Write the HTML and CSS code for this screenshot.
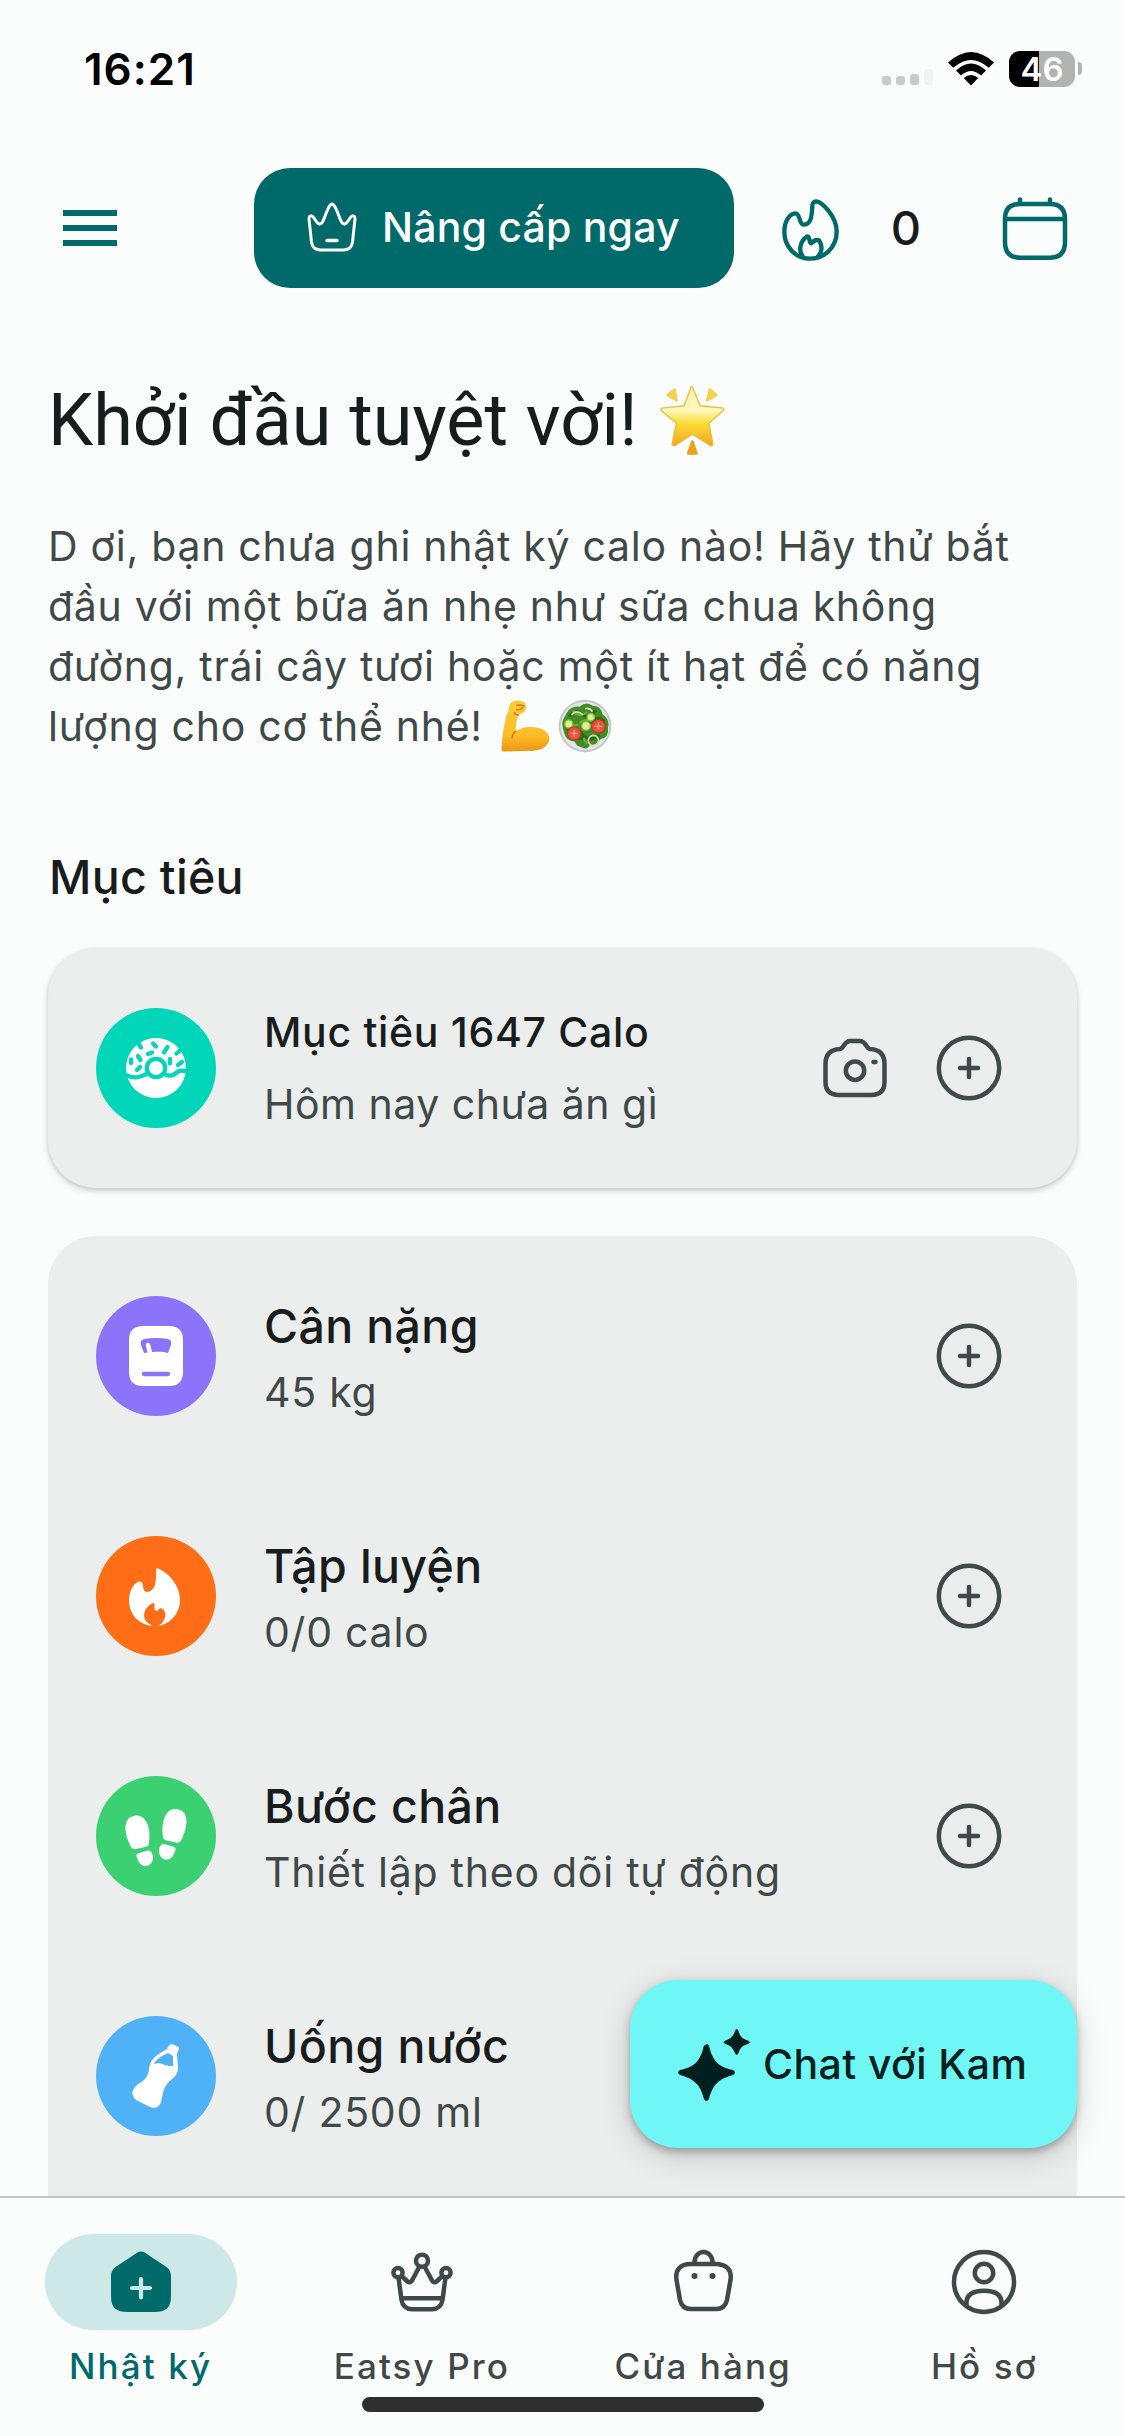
FILE: index.html
```html
<!DOCTYPE html>
<html lang="vi">
<head>
<meta charset="utf-8">
<title>Nhật ký</title>
<link rel="stylesheet" href="styles.css">
</head>
<body>
<svg width="0" height="0" class="defs" aria-hidden="true">
  <symbol id="add" viewBox="0 0 72 72"><g fill="none" stroke="currentColor" stroke-width="4.500" stroke-linecap="round"><circle cx="36" cy="36" r="30.200"/><path d="M36 27v18M27 36h18"/></g></symbol>
</svg>
<div class="screen">
  <div class="status">
    <span class="clock">16:21</span>
    <div class="status-icons">
      <svg width="52" height="18" viewBox="0 0 52 18"><g fill="#c9cbcb"><rect y="8" width="9" height="9" rx="3"/><rect x="14" y="8" width="9" height="9" rx="3"/><rect x="28" y="6" width="9" height="11" rx="3"/></g><rect x="42" y="1" width="9" height="16" rx="3" fill="#f1f3f3"/></svg>
      <svg class="wifi" width="46" height="34" viewBox="0 0 46 34"><path d="M0 10.500Q23-10.500 46 10.500L40.800 15.800Q23-0 5.200 15.800Z"/><path d="M8 18.500Q23 4.500 38 18.500L33 23.600Q23 14.500 13 23.600Z"/><path d="M15.800 26Q23 20 30.200 26L23 33.400Z"/></svg>
      <div class="battery"><span>46</span></div>
      <div class="nub"></div>
    </div>
  </div>

  <header class="topbar">
    <div class="menu"><i></i><i></i><i></i></div>
    <div class="upgrade">
      <svg width="56" height="56" viewBox="0 0 56 56" fill="none" stroke="#fff" stroke-width="3" stroke-linecap="round" stroke-linejoin="round"><path d="M5 20C5 16 8 16 10 19C13 24 16 28 19 22C22 15 25 5 28 5C31 5 34 15 37 22C40 28 43 24 46 19C48 16 51 16 51 20L48.500 43Q47.500 50.500 40 51H16Q8.500 50.500 7.500 43Z"/><path d="M23 41.500h10" stroke-width="3.400"/></svg>
      <span>Nâng cấp ngay</span>
    </div>
    <svg class="flame" width="62" height="66" viewBox="120 140 186 198" fill="none" stroke="#006a6a" stroke-width="13" stroke-linejoin="round" stroke-linecap="round"><path d="M217 170C216 158 222 152 232 154C244 156 290 196 290 244C290 290 254 325 210 325C166 325 133 288 133 244C133 214 148 190 166 189C182 189 176 224 192 223C214 222 215 196 217 170Z"/><path d="M188 318C176 304 178 272 202 258C212 262 206 278 214 279C222 270 230 266 238 271C248 288 246 308 234 318"/></svg>
    <span class="streak">0</span>
    <svg class="calendar" width="72" height="72" viewBox="0 0 72 72" fill="none" stroke="#006a6a" stroke-width="4.500" stroke-linecap="round"><path d="M21 12H51Q66 12 66 27V50Q66 65.700 51 65.700H21Q6 65.700 6 50V27Q6 12 21 12ZM6 27H66M21 7.500V12M51 7.500V12"/></svg>
  </header>

  <main class="content">
    <h1>Khởi đầu tuyệt vời!<svg class="star" role="img" aria-label="🌟" width="67" height="71" viewBox="536 44 200 212">
      <defs><linearGradient id="sg" x1="0" y1="0" x2="0" y2="1"><stop offset="0" stop-color="#ffefae"/><stop offset=".4" stop-color="#fff8bd"/><stop offset=".62" stop-color="#fcdc39"/><stop offset="1" stop-color="#f0a41c"/></linearGradient></defs>
      <path d="M636 50L659 106L728 113Q732 117 727 121L685 158L697 221Q695 228 689 225L636 191L584 225Q576 227 575 220L588 158L543 121Q539 116 545 113L611 106L632 50Q634 46 636 50Z" fill="url(#sg)" stroke="#efbd3d" stroke-width="4"/>
      <path d="M558 72L581 54Q585 52 586 57L592 91Q592 96 587 93L559 77ZM711 72L689 54Q685 52 684 57L676 91Q676 96 681 93L710 77Z" fill="#f6d04a"/><path d="M632 211Q636 205 639 211L652 248Q652 252 647 252H623Q618 252 619 247Z" fill="#eaa121"/></svg></h1>
    <p class="tip">D ơi, bạn chưa ghi nhật ký calo nào! Hãy thử bắt đầu với một bữa ăn nhẹ như sữa chua không đường, trái cây tươi hoặc một ít hạt để có năng lượng cho cơ thể nhé!<svg class="arm" role="img" aria-label="💪" width="51" height="54" viewBox="62 988 152 160">
      <defs><linearGradient id="ag" x1="0" y1="0" x2="0" y2="1"><stop offset="0" stop-color="#ffcb36"/><stop offset=".7" stop-color="#fdbb27"/><stop offset="1" stop-color="#eb9612"/></linearGradient></defs>
      <path d="M90 1008Q93 996 106 993Q120 990 132 996Q141 1001 139 1014Q139 1026 129 1029L116 1036Q107 1060 109 1084Q130 1070 154 1071Q188 1072 204 1090Q214 1104 206 1118Q192 1144 150 1142L72 1144Q64 1143 67 1128Q70 1080 80 1042Q88 1024 90 1008Z" fill="url(#ag)"/><path d="M109 1084Q98 1092 98 1104M112 1006Q120 1004 134 1008M112 1019Q122 1022 130 1013M116 1036Q106 1034 104 1028" fill="none" stroke="#c47a10" stroke-width="4" stroke-linecap="round"/></svg><svg class="salad" role="img" aria-label="🥗" width="54" height="54" viewBox="236 989 160 160">
      <circle cx="316" cy="1069" r="78" fill="#c3c9cb"/><circle cx="316" cy="1069" r="72" fill="#e3e6e6"/>
      <path d="M262 1030Q275 1008 300 1012Q320 994 340 1010Q362 1008 368 1034Q392 1050 384 1076Q388 1104 362 1108Q350 1126 330 1126Q322 1142 306 1132Q290 1130 286 1116Q258 1112 254 1088Q244 1060 252 1048Z" fill="#428c26"/>
      <path d="M270 1040Q290 1016 306 1034T350 1022M264 1084Q284 1064 306 1092T360 1096M330 1060Q350 1036 374 1056M296 1108Q320 1098 334 1112" fill="none" stroke="#286b18" stroke-width="9"/><path d="M280 1024Q300 1046 322 1028M300 1060Q320 1044 336 1056M276 1070L296 1064M312 1104L322 1122" fill="none" stroke="#68ad35" stroke-width="7"/>
      <g fill="#dff18e" stroke="#83bd42" stroke-width="4"><circle cx="268" cy="1063" r="12"/><circle cx="333" cy="1043" r="11"/><circle cx="319" cy="1069" r="13"/></g>
      <g fill="#e8513a" stroke="#bf3524" stroke-width="3"><circle cx="284" cy="1091" r="20"/><circle cx="356" cy="1070" r="20"/></g><path d="M272 1091h24M284 1080v22M344 1070h24M356 1059v22" stroke="#f5a184" stroke-width="4"/>
      <g fill="none" stroke="#e4d2bd" stroke-width="5"><circle cx="341" cy="1112" r="15"/><path d="M276 1036Q290 1018 310 1036M316 1018Q330 1014 338 1026"/></g></svg></p>

    <h2>Mục tiêu</h2>

    <section class="card goal">
      <svg class="badge" viewBox="0 0 120 120"><circle cx="60" cy="60" r="60" fill="#02d6b8"/><circle cx="60" cy="60" r="30" fill="#fff"/><g fill="none" stroke="#02d6b8" stroke-width="4.300" stroke-linecap="round"><circle cx="60" cy="60" r="9.200"/><path d="M29 66.500C37 71 43 70 51 65.500M69 66.500C81 71 78 59.500 91 63.500M35 51.500V55M42 48L44.500 52M44 59L41 62M52 46L56 44.500M57 35.500L60 38.500M71.500 39L68 44.500M42 35L45 39.500M85 41.500L80.500 45.500M74 51V55.500M86 54L82 57"/></g></svg>
      <div class="info"><b>Mục tiêu 1647 Calo</b><span>Hôm nay chưa ăn gì</span></div>
      <svg class="camera" width="72" height="72" viewBox="0 0 72 72" fill="none" stroke="#3f4948" stroke-width="4.500" stroke-linecap="round"><path d="M6.500 32C6.500 22 12 17.500 21 17C25 16.500 25 9 31 9H41C47 9 47 16.500 51 17C60 17.500 65.500 22 65.500 32V50Q65.500 63 52 63H20Q6.500 63 6.500 50Z"/><circle cx="36" cy="38.700" r="9.200"/><path d="M54.500 30H56.500"/></svg>
      <svg class="add"><use href="#add"/></svg>
    </section>

    <section class="card list">
      <div class="row">
        <svg class="badge" viewBox="0 0 120 120"><circle cx="60" cy="60" r="60" fill="#8b73fa"/><path d="M47 30H73Q87 30 87 44V76Q87 90 73 90H47Q33 90 33 76V44Q33 30 47 30Z" fill="#fff"/><path d="M48 57L45 49C44 46 45 44 48 43C56 41.500 64 41.500 72 43C75 44 75.500 46 75 49L72 57C68 55.500 62 55.500 56 56Z" fill="#8b73fa"/><path d="M52 49L54 57" stroke="#fff" stroke-width="4.500" stroke-linecap="round"/><path d="M48 78H72" stroke="#8b73fa" stroke-width="4.300" stroke-linecap="round"/></svg>
        <div class="info"><b>Cân nặng</b><span>45 kg</span></div>
        <svg class="add"><use href="#add"/></svg>
      </div>
      <div class="row">
        <svg class="badge" viewBox="0 0 120 120"><circle cx="60" cy="60" r="60" fill="#ff6e17"/><path d="M60 34C60 31.500 62 32 63 33C74 38 84 50 84 64C84 78 74 88 62 90C70 86 72 75 65 72C62 73 62 75.500 60 75C57 74 60 67 57 67C46 72 44 86 58 90C42 89 33 78 33 64C33 53 40 45 44 45.500C49 46 45 55.500 51 56C61 55 60 42 60 34Z" fill="#fff"/></svg>
        <div class="info"><b>Tập luyện</b><span>0/0 calo</span></div>
        <svg class="add"><use href="#add"/></svg>
      </div>
      <div class="row">
        <svg class="badge" viewBox="0 0 120 120"><circle cx="60" cy="60" r="60" fill="#3bd172"/><g fill="#fff"><path id="foot" d="M41 39.500C51 40 55 53 53 67C53 69.500 51.500 70.500 49 71L40 73C36 74 35 71 34 69C28 56 26 40 41 39.500ZM43 77L52 74.500C56 73.500 57 80 57 82C56 92 45 93 42 84C40 80 39.500 78 43 77Z"/><use href="#foot" transform="translate(120 -6.500) scale(-1 1)"/></g></svg>
        <div class="info"><b>Bước chân</b><span>Thiết lập theo dõi tự động</span></div>
        <svg class="add"><use href="#add"/></svg>
      </div>
      <div class="row">
        <svg class="badge" viewBox="0 0 120 120"><circle cx="60" cy="60" r="60" fill="#4fb2f6"/><path fill="#fff" fill-rule="evenodd" d="M71 33L72.500 30Q74 27.500 77 28.500L81 30Q84 31.500 82.500 34L81 38L82 52C82 60 76 62 72 67C66 74 67 80 65 86C63 92 58 93 54 91L40 84C36 80 35 76 39 71C42 67 48 66 51 60C54 55 52 50 56 44C60 39 66 36 71 33ZM72 37C66 40 60 43 58 48C66 45.500 69 51 77 50L77 40Z"/></svg>
        <div class="info"><b>Uống nước</b><span>0/ 2500 ml</span></div>
      </div>
    </section>
  </main>

  <div class="fab">
    <svg width="74" height="74" viewBox="0 0 74 74" fill="#002020"><path d="M25.800 12C28.300 9.500 30.600 9.500 31 12C35 28 41 33 55 36Q59 38.700 55 41C41 45 35 50 31 65Q28.500 69 26 65C22 50 16 45 2 41Q-2 38.700 2 36C16 33 22 28 25.800 12Z"/><path d="M57 -3Q58.700 -7 60.500 -3C62 3 65 5 70 6.500Q74 8.300 70 10C65 11 62 14 60.500 19Q58.700 23 57 19C55 14 52 11 47.500 10Q43.500 8.300 47.500 6.500C52 5 55 3 57 -3Z"/></svg>
    <span>Chat với Kam</span>
  </div>

  <nav class="tabs">
    <div class="tab active"><div class="pill"><svg width="72" height="72" viewBox="0 0 72 72"><path fill="#006a6a" d="M36 5.500C39 5.500 41 7.500 44 9.500L60 20C64.500 23 66 26 66 31V50C66 62 61 66 49 66H23C11 66 6 62 6 50V31C6 26 7.500 23 12 20L28 9.500C31 7.500 33 5.500 36 5.500Z"/><path d="M36 33V51.500M27 42H45" stroke="#cce8e7" stroke-width="4.200" stroke-linecap="round"/></svg></div><span>Nhật ký</span></div>
    <div class="tab"><div class="pill"><svg width="72" height="72" viewBox="0 0 72 72" fill="none" stroke="#3f4948" stroke-width="4.500" stroke-linejoin="round"><circle cx="36" cy="14.700" r="6"/><circle cx="12" cy="26.700" r="4.600"/><circle cx="60" cy="26.700" r="4.600"/><path d="M12.500 31.500L15.500 54Q17 63 26 63.300H46Q55 63 56.500 54L59.500 31.500M15 29.500L21.500 35.500Q24 37.500 26 34.500L33.500 20.500M57 29.500L50.500 35.500Q48 37.500 46 34.500L38.500 20.500M15.500 52.300H56.500"/></svg></div><span>Eatsy Pro</span></div>
    <div class="tab"><div class="pill"><svg width="72" height="72" viewBox="0 0 72 72" fill="none" stroke="#3f4948" stroke-width="4.500"><path d="M24 18H48C60 18 65 24 63.500 34L60 54Q58 63 49 63H24Q15 63 13 54L9.500 34C8 24 13 18 24 18ZM27.500 18V16A9 10 0 0 1 45.500 16V18"/><g fill="#3f4948" stroke="none"><circle cx="27.500" cy="30" r="3"/><circle cx="45.500" cy="30" r="3"/></g></svg></div><span>Cửa hàng</span></div>
    <div class="tab"><div class="pill"><svg width="72" height="72" viewBox="0 0 72 72" fill="none" stroke="#3f4948" stroke-width="4.500"><circle cx="36" cy="36" r="30"/><circle cx="36" cy="27" r="9.200"/><path d="M18.500 59.500V57C18.500 48 26 44.700 36 44.700S53.500 48 53.500 57V59.500"/></svg></div><span>Hồ sơ</span></div>
    <div class="home-bar"></div>
  </nav>
</div>
</body>
</html>
```
FILE: styles.css
```css
* { box-sizing: border-box; }
body { margin: 0; background: #fbfdfd; color: #191c1c; font-family: Inter, "Noto Sans", sans-serif; }
svg { display: block; flex: none; }
.defs { position: absolute; }
.screen { position: relative; width: 1125px; height: 2436px; display: flex; flex-direction: column; overflow: hidden; background: #fbfdfd; }

.status { flex: none; height: 168px; padding: 0 43px 31px 84px; display: flex; align-items: center; justify-content: space-between; color: #000; }
.clock { font-size: 44px; font-weight: 600; letter-spacing: 1px; }
.status-icons { display: flex; align-items: center; height: 36px; }
.status-icons > svg:first-child { margin: 16px 14px 0 0; }
.wifi { margin-right: 15px; }
.battery { width: 66px; height: 36px; border-radius: 11px; display: flex; align-items: center; justify-content: center; background: linear-gradient(90deg, #000 30px, #b1b3b3 30px); color: #fff; font-size: 33px; font-weight: 600; line-height: 36px; }
.nub { width: 4px; height: 13px; margin-left: 3px; border-radius: 0 4px 4px 0; background: #b1b3b3; }

.topbar { flex: none; height: 120px; padding-left: 63px; display: flex; align-items: center; }
.menu { width: 54px; display: flex; flex-direction: column; gap: 9px; }
.menu i { height: 6px; background: #006a6a; }
.upgrade { margin-left: 137px; width: 480px; height: 120px; padding: 0 0 2px 50px; display: flex; align-items: center; gap: 22px; border-radius: 36px; background: #006a6a; color: #fff; font-size: 41px; font-weight: 500; letter-spacing: .2px; }
.flame { margin: 3px 0 0 46px; }
.streak { width: 50px; margin: 0 0 2px 39px; text-align: center; font-size: 47px; font-weight: 500; }
.calendar { margin-left: 68px; }

.content { flex: none; height: 1908px; padding: 85px 48px 0; overflow: hidden; }
h1, h2, p { margin: 0; }
h1 { height: 96px; font: 400 72px/96px Roboto, "Noto Sans", sans-serif; letter-spacing: .02px; }
h1 svg, .tip svg { display: inline-block; }
.star { margin-left: 21px; vertical-align: -11px; }
.tip { width: 1000px; height: 240px; margin-top: 47px; font-size: 41px; line-height: 60px; letter-spacing: .72px; color: #3f4948; }
.arm { margin-left: 17px; vertical-align: -12px; }
.salad { margin-left: 7px; vertical-align: -12px; }
h2 { margin: 85px 0 35px; padding-left: 1px; font-size: 46.5px; line-height: 72px; font-weight: 500; letter-spacing: .3px; }

.card { border-radius: 48px; background: #ebeeed; }
.goal { height: 240px; padding: 0 72px 0 48px; display: flex; align-items: center; box-shadow: 0 3px 6px rgba(0, 0, 0, .17), 0 1px 4px rgba(0, 0, 0, .08); }
.badge { width: 120px; height: 120px; }
.info { flex: 1; margin-left: 48px; display: flex; flex-direction: column; font-size: 41px; line-height: 60px; letter-spacing: .75px; color: #3f4948; white-space: nowrap; }
.info b { color: #191c1c; font-weight: 500; letter-spacing: .68px; }
.goal .info { gap: 12px; }
.goal .info span { letter-spacing: .5px; }
.row .info b { font-size: 46.5px; line-height: 72px; letter-spacing: .35px; }
.add { width: 72px; height: 72px; color: #3f4948; }
.camera { margin-right: 42px; }
.list { height: 1060px; margin-top: 48px; }
.row { height: 240px; padding: 0 72px 0 48px; display: flex; align-items: center; }

.fab { position: absolute; left: 630px; top: 1980px; width: 447px; height: 168px; padding-left: 48px; display: flex; align-items: center; gap: 11px; border-radius: 48px; background: #6ff7f6; color: #002020; font-size: 41px; font-weight: 500; letter-spacing: .4px; box-shadow: 0 4px 9px rgba(0, 0, 0, .28), 0 8px 30px 3px rgba(0, 0, 0, .13); }
.fab svg { margin-top: 13px; overflow: visible; }

.tabs { position: relative; flex: none; height: 240px; padding-top: 36px; display: grid; grid-template-columns: repeat(4, 1fr); border-top: 2px solid #bec6c5; background: #fbfdfd; }
.tab { display: flex; flex-direction: column; align-items: center; gap: 12px; font-size: 35px; line-height: 48px; font-weight: 500; letter-spacing: 2.1px; color: #3f4948; }
.pill { width: 192px; height: 96px; display: flex; align-items: center; justify-content: center; border-radius: 48px; }
.active { color: #006a6a; }
.active .pill { background: #cce8e7; }
.home-bar { position: absolute; left: 362px; top: 199px; width: 402px; height: 15px; border-radius: 8px; background: #2f2f2f; }
```
